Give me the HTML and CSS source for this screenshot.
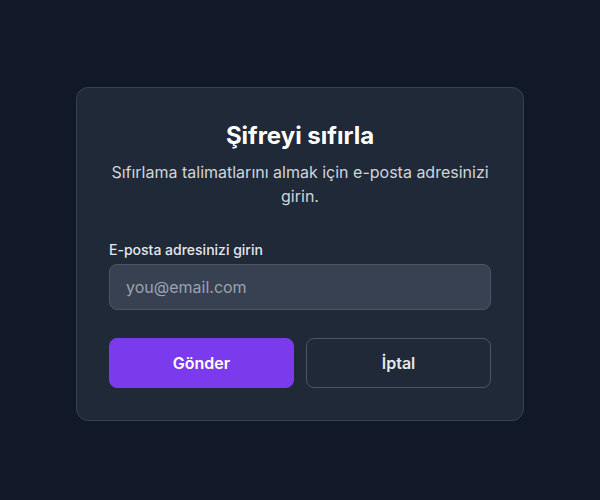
FILE: index.html
```html
<!DOCTYPE html>
<html lang="tr">
<head>
    <meta charset="UTF-8">
    <meta name="viewport" content="width=device-width, initial-scale=1.0">
    <title>Şifreyi sıfırla</title>
    <link rel="stylesheet" href="styles.css">
</head>
<body>
    <div class="card">
        <div class="card-header">
            <h1>Şifreyi sıfırla</h1>
            <p class="subtitle">Sıfırlama talimatlarını almak için e-posta adresinizi girin.</p>
        </div>
        <form class="reset-form" onsubmit="return false;">
            <label for="email">E-posta adresinizi girin</label>
            <input type="email" id="email" placeholder="you@email.com">
            <div class="actions">
                <button type="submit" class="btn btn-primary">Gönder</button>
                <button type="button" class="btn btn-secondary">İptal</button>
            </div>
        </form>
    </div>
</body>
</html>
```

FILE: styles.css
```css
* {
    box-sizing: border-box;
}
html, body {
    height: 100%;
}
body {
    margin: 0;
    padding: 8px 0 0;
    display: flex;
    align-items: center;
    justify-content: center;
    background-color: #111827;
    font-family: Inter, "Noto Sans", sans-serif;
    color: #f9fafb;
}
.card {
    width: 448px;
    padding: 32px;
    background-color: #1f2937;
    border: 1px solid #374151;
    border-radius: 12px;
}
.card-header {
    text-align: center;
    margin-bottom: 32px;
}
h1 {
    margin: 0;
    font-size: 24px;
    line-height: 32px;
    font-weight: 700;
    color: #fff;
}
.subtitle {
    margin: 8px 0 0;
    font-size: 16px;
    line-height: 24px;
    color: #d1d5db;
}
.reset-form label {
    display: block;
    margin-bottom: 4px;
    font-size: 14px;
    line-height: 20px;
    font-weight: 500;
    color: #e5e7eb;
}
.reset-form input {
    display: block;
    width: 100%;
    height: 46px;
    padding: 0 16px;
    font-family: inherit;
    font-size: 16px;
    color: #f9fafb;
    background-color: #374151;
    border: 1px solid #4b5563;
    border-radius: 8px;
    outline: none;
}
.reset-form input::placeholder {
    color: #9ca3af;
}
.actions {
    display: flex;
    gap: 12px;
    margin-top: 28px;
}
.btn {
    flex: 1;
    height: 50px;
    font-family: inherit;
    font-size: 16px;
    font-weight: 600;
    border-radius: 8px;
    cursor: pointer;
}
.btn-primary {
    background-color: #7c3aed;
    border: 1px solid #7c3aed;
    color: #fff;
}
.btn-secondary {
    background-color: transparent;
    border: 1px solid #4b5563;
    color: #e5e7eb;
}
```
